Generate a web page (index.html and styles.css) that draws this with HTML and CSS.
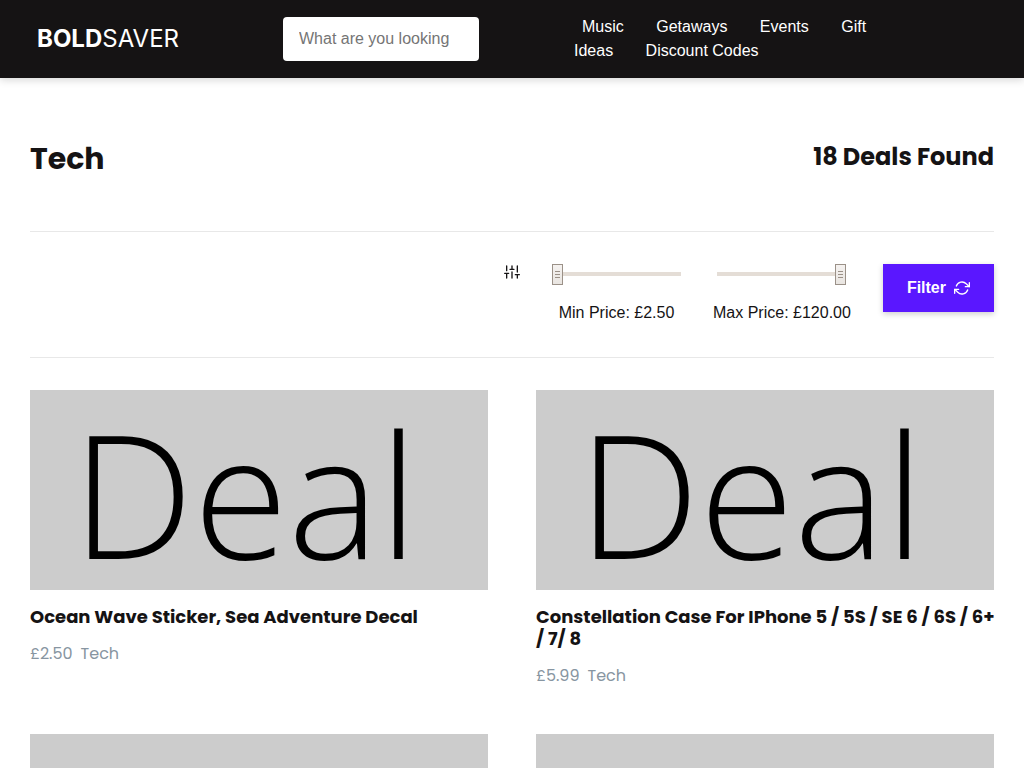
FILE: index.html
```html
<!DOCTYPE html>
<html lang="en">
<head>
<meta charset="utf-8">
<meta name="viewport" content="width=device-width, initial-scale=1">
<title>Tech deals | BoldSaver</title>
<link rel="stylesheet" href="styles.css">
</head>
<body>
<header class="site-header">
  <a class="logo" href="#"><strong>BOLD</strong>SAVER</a>
  <form class="search">
    <input class="search-input" type="text" aria-label="Search deals" placeholder="What are you looking for?">
  </form>
  <nav class="nav">
    <a href="#">Music</a>
    <a href="#">Getaways</a>
    <a href="#">Events</a>
    <a href="#">Gift Ideas</a>
    <a href="#">Discount Codes</a>
  </nav>
</header>
<main class="page">
  <div class="page-head">
    <h1 class="page-title">Tech</h1>
    <h2 class="page-count">18 Deals Found</h2>
  </div>
  <form class="filters">
    <svg class="icon" viewBox="0 0 24 24" aria-hidden="true"><path d="M4 21v-7M4 10V3M12 21v-9M12 8V3M20 21v-5M20 12V3M1 14h6M9 8h6M17 16h6"/></svg>
    <div class="range-field">
      <input class="range" id="min" type="range" min="0" max="100" value="0">
      <label for="min">Min Price: £2.50</label>
    </div>
    <div class="range-field">
      <input class="range" id="max" type="range" min="0" max="100" value="100">
      <label for="max">Max Price: £120.00</label>
    </div>
    <button class="filter-button" type="button">Filter
      <svg class="icon" viewBox="0 0 24 24" aria-hidden="true"><path d="M23 4v6h-6M1 20v-6h6"/><path d="M3.51 9a9 9 0 0 1 14.85-3.36L23 10M1 14l4.64 4.36A9 9 0 0 0 20.49 15"/></svg>
    </button>
  </form>
  <section class="deals">
    <article class="deal">
      <div class="deal-image">Deal</div>
      <h3 class="deal-title">Ocean Wave Sticker, Sea Adventure Decal</h3>
      <p class="deal-meta"><span>£2.50</span><span>Tech</span></p>
    </article>
    <article class="deal">
      <div class="deal-image">Deal</div>
      <h3 class="deal-title">Constellation Case For IPhone 5 / 5S / SE 6 / 6S / 6+ / 7/ 8</h3>
      <p class="deal-meta"><span>£5.99</span><span>Tech</span></p>
    </article>
    <article class="deal">
      <div class="deal-image">Deal</div>
    </article>
    <article class="deal">
      <div class="deal-image">Deal</div>
    </article>
  </section>
</main>
</body>
</html>
```
FILE: styles.css
```css
* { box-sizing: border-box; }

body {
  margin: 0;
  background: #fff;
  color: #151314;
  font: 16px/24px "Liberation Sans", Arial, sans-serif;
}

h1, h2, h3, p { margin: 0; }

.site-header {
  display: grid;
  grid-template-columns: 246fr 291fr 413fr;
  align-items: center;
  padding: 15px 37px;
  background: #151314;
  box-shadow: 0 2px 8px rgba(0, 0, 0, 0.16);
}

.logo {
  color: #fff;
  font: 400 24px/32px Inter, sans-serif;
  text-decoration: none;
}

.logo strong { font-weight: 700; }

.search-input {
  display: block;
  width: 196px;
  height: 44px;
  padding: 0 29px 0 16px;
  border: 0;
  border-radius: 4px;
  background: #fff;
  font: 16px "Liberation Sans", Arial, sans-serif;
}

.search-input::placeholder { color: #757575; }

.nav { max-width: 328px; }

.nav a {
  margin-right: 12px;
  padding: 0 8px;
  color: #fff;
  text-decoration: none;
}

.page { padding: 64px 30px; }

.page-head {
  display: flex;
  justify-content: space-between;
  align-items: flex-start;
  padding-bottom: 55px;
  border-bottom: 1px solid #e8e8e8;
}

.page-title,
.page-count,
.deal-title,
.deal-meta { font-family: Poppins, Inter, sans-serif; }

.page-title { font-size: 30px; line-height: 34px; }
.page-count { font-size: 24px; line-height: 30px; }

.filters {
  display: flex;
  justify-content: flex-end;
  align-items: flex-start;
  gap: 32px;
  padding: 32px 0;
  border-bottom: 1px solid #e8e8e8;
}

.icon {
  flex: none;
  width: 16px;
  height: 16px;
  fill: none;
  stroke: currentColor;
  stroke-width: 2;
  stroke-linecap: round;
  stroke-linejoin: round;
}

.range-field {
  display: flex;
  flex-direction: column;
  align-items: center;
  gap: 17px;
  min-width: 129px;
}

.range {
  width: 129px;
  height: 20px;
  margin: 0;
  background: transparent;
  appearance: none;
}

.range::-webkit-slider-runnable-track {
  height: 4px;
  background: #e4ddd6;
}

.range::-webkit-slider-thumb {
  width: 11px;
  height: 21px;
  margin-top: -8px;
  border: 1px solid #9b9188;
  background:
    linear-gradient(#9b9188, #9b9188) center 6px / 5px 1px no-repeat,
    linear-gradient(#9b9188, #9b9188) center 9px / 5px 1px no-repeat,
    linear-gradient(#9b9188, #9b9188) center 12px / 5px 1px no-repeat,
    linear-gradient(#f5f2f0, #e9e5e1);
  appearance: none;
}

.filter-button {
  display: flex;
  align-items: center;
  gap: 8px;
  height: 48px;
  padding: 0 24px;
  border: 0;
  background: #5a17ff;
  box-shadow: 0 2px 6px rgba(0, 0, 0, 0.2);
  color: #fff;
  font: bold 16px/24px "Liberation Sans", Arial, sans-serif;
}

.deals {
  display: grid;
  grid-template-columns: 1fr 1fr;
  gap: 46px 48px;
  padding-top: 32px;
}

.deal-image {
  height: 200px;
  padding-left: 42px;
  overflow: hidden;
  background: #ccc;
  color: #000;
  font: 300 172px/204px "Open Sans", "Noto Sans", sans-serif;
}

.deal-title {
  margin: 16px -4px 14px 0;
  font-size: 18px;
  line-height: 22px;
}

.deal-meta {
  display: flex;
  gap: 8px;
  color: #8795a1;
}
```
